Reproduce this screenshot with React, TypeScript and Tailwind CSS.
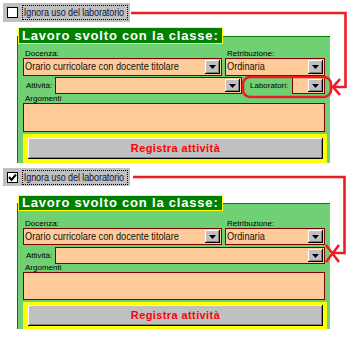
import React from "react";

const FONT = "font-['Liberation_Sans',Arial,sans-serif]";

function Arrow() {
  return (
    <svg width="7" height="4" viewBox="0 0 7 4">
      <polygon points="0,0 7,0 3.5,4" fill="#000" />
    </svg>
  );
}

function DropBtn() {
  return (
    <div className="m-[1px] w-[15px] shrink-0 bg-[#c0c0c0] flex items-center justify-center shadow-[inset_-1px_-1px_0_#000,inset_1px_1px_0_#fff,inset_-2px_-2px_0_#808080]">
      <Arrow />
    </div>
  );
}

function Combo({ cls, text }: { cls: string; text?: string }) {
  return (
    <div className={`flex shrink-0 bg-[#ffcc99] border border-[#800000] box-border ${cls}`}>
      <div className="flex-1 min-w-0 flex items-center pl-[1px] overflow-hidden whitespace-nowrap">
        {text && (
          <span className={`inline-block origin-left scale-x-[0.8] text-[11.5px] text-[#111] ${FONT}`}>{text}</span>
        )}
      </div>
      <DropBtn />
    </div>
  );
}

type V = {
  wrap: string;
  bar: string;
  title: string;
  panel: string;
  combo: string;
  att: string;
  arg: string;
  ta: string;
  yel: string;
};

const V1: V = {
  wrap: "mt-0",
  bar: "h-[19px]",
  title: "mt-[5px] h-[17px]",
  panel: "pt-[11px]",
  combo: "h-[18px]",
  att: "mt-[1px]",
  arg: "h-[9px]",
  ta: "h-[29px]",
  yel: "h-[29px] py-[4px]",
};

const V2: V = {
  wrap: "mt-[5px]",
  bar: "h-[18px]",
  title: "mt-[9px] h-[16px]",
  panel: "pt-[14px]",
  combo: "h-[17px]",
  att: "mt-[2px]",
  arg: "h-[8px]",
  ta: "h-[28px]",
  yel: "h-[27px] py-[3px]",
};

function Section({ checked, lab, v }: { checked: boolean; lab: boolean; v: V }) {
  return (
    <div className={v.wrap}>
      <div className={`ml-[3px] w-[127px] bg-[#c0c0c0] flex items-center ${v.bar}`}>
        <div className="ml-[4px] shrink-0 w-[11px] h-[11px] bg-white border border-black box-border flex items-center justify-center">
          {checked && (
            <svg width="9" height="9" viewBox="0 0 9 9">
              <polyline points="1,4 3.5,7 8,1.5" fill="none" stroke="#000" strokeWidth="2" />
            </svg>
          )}
        </div>
        <div className="ml-[4px] w-[106px] shrink-0 h-[15px] border border-dotted border-black flex items-center whitespace-nowrap">
          <span className={`inline-block origin-left scale-x-[0.82] pl-[1px] text-[11px] tracking-[-0.1px] text-[#10103a] ${FONT}`}>
            Ignora uso del laboratorio
          </span>
        </div>
      </div>
      <div
        className={`relative z-10 ml-[18px] w-[205px] bg-[#008000] border border-[#ffff00] box-border flex items-center pl-[3px] text-white font-bold text-[13px] tracking-[0.8px] whitespace-nowrap ${FONT} ${v.title}`}
      >
        Lavoro svolto con la classe:
      </div>
      <div className={`-mt-[8px] ml-[17px] w-[313px] bg-[#70d074] border-t border-l border-[#008000] pl-[5px] pr-[4px] box-border ${v.panel}`}>
        <div className={`flex h-[10px] items-end text-[8px] leading-[9px] text-black ${FONT}`}>
          <div className="w-[202px] pl-[2px]">Docenza:</div>
          <div className="pl-[2px]">Retribuzione:</div>
        </div>
        <div className="flex gap-[3px]">
          <Combo cls={`w-[199px] ${v.combo}`} text="Orario curricolare con docente titolare" />
          <Combo cls={`w-[100px] ${v.combo}`} text="Ordinaria" />
        </div>
        <div className={`flex items-center ${v.att}`}>
          <div className={`ml-[3px] w-[29px] text-[8px] text-black ${FONT}`}>Attività:</div>
          {lab ? (
            <>
              <Combo cls="w-[187px] h-[17px]" />
              <div className={`ml-[8px] w-[42px] text-[8px] text-black ${FONT}`}>Laboratori:</div>
              <Combo cls="w-[33px] h-[17px]" />
            </>
          ) : (
            <Combo cls="w-[270px] h-[17px]" />
          )}
        </div>
        <div className={`flex items-end pl-[2px] text-[8px] leading-[9px] text-black ${FONT} ${v.arg}`}>Argomenti</div>
        <div className={`w-[302px] bg-[#ffcc99] border border-[#800000] box-border ${v.ta}`} />
        <div className={`mt-[2px] w-[304px] bg-[#ffff00] box-border flex pl-[5px] pr-[4px] ${v.yel}`}>
          <div
            className={`flex-1 bg-[#c0c0c0] flex items-center justify-center text-[#ff0000] font-bold text-[11px] tracking-[0.4px] shadow-[inset_-1px_-1px_0_#000,inset_1px_1px_0_#fff,inset_-2px_-2px_0_#808080] ${FONT}`}
          >
            Registra attività
          </div>
        </div>
      </div>
    </div>
  );
}

export default function App() {
  const red = "#ed1c24";
  return (
    <div className="relative w-[353px] h-[338px] bg-white overflow-hidden">
      <div className="pt-[3px]">
        <Section checked={false} lab={true} v={V1} />
        <Section checked={true} lab={false} v={V2} />
      </div>
      <svg className="absolute left-0 top-0 pointer-events-none" width="353" height="338" viewBox="0 0 353 338">
        <g fill="none" stroke={red} strokeWidth="2.6" strokeLinejoin="miter">
          <path d="M131,13 H345.5 V87 H333" />
          <path d="M340,79 L333,87 L340,95" />
          <rect x="243" y="77" width="88" height="20" rx="7" />
          <path d="M133,177 H344.5 V253 H332" />
          <path d="M326,245 L339,262 M339,245 L326,262" />
        </g>
      </svg>
    </div>
  );
}
